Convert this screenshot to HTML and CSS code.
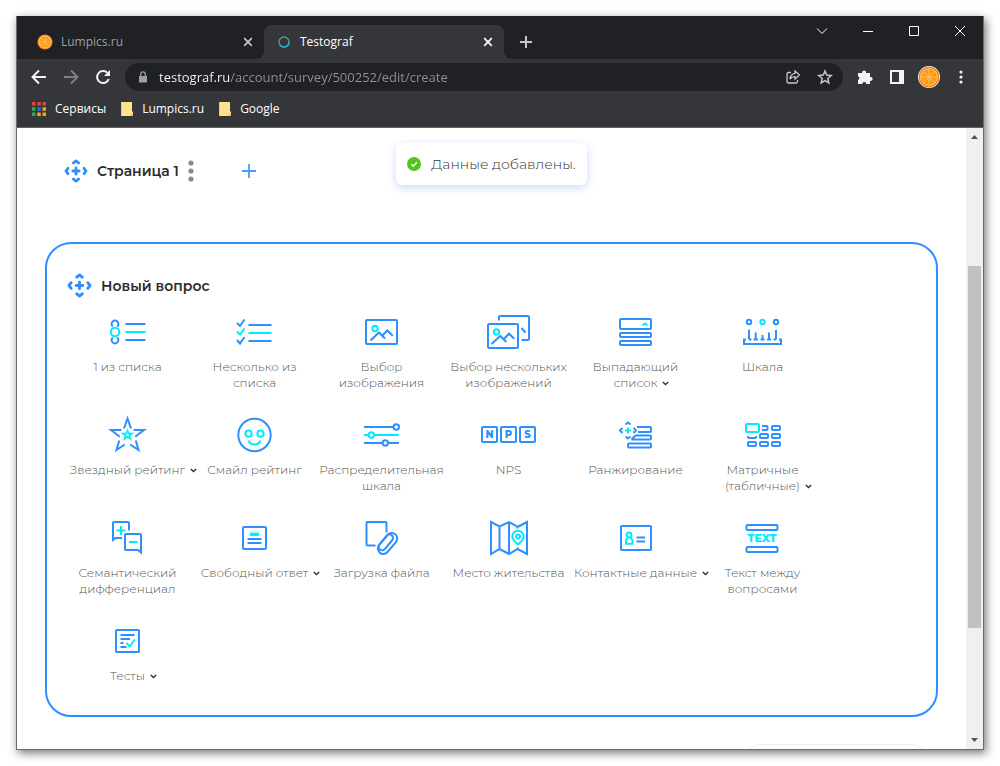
FILE: index.html
```
<!DOCTYPE html>
<html lang="ru">
<head>
<meta charset="utf-8">
<title>Testograf</title>
<link rel="stylesheet" href="styles.css">
</head>
<body>
<svg class="defs" aria-hidden="true">
  <symbol id="orange" viewBox="0 0 20 20">
    <circle cx="10" cy="10" r="9.5" fill="#f5821f"/>
    <circle cx="10" cy="10" r="8.1" fill="#fbc687"/>
    <circle cx="10" cy="10" r="7.2" fill="#ff9b0a"/>
    <path d="M10 3v14M3 10h14M5 5l10 10M15 5L5 15" stroke="#fbc687" stroke-width=".8"/>
  </symbol>
  <symbol id="close" viewBox="0 0 10 10"><path d="M1.2 1.2l7.6 7.6M8.8 1.2L1.2 8.8" stroke="currentColor" stroke-width="1.7"/></symbol>
  <symbol id="move" viewBox="0 0 24 24">
    <path d="M12 8.800v6.400M8.800 12h6.400M9.300 4L12 1.900 14.700 4M9.300 20L12 22.100 14.700 20M4 9.300L1.900 12 4 14.700M20 9.300L22.100 12 20 14.700" fill="none" stroke="#2e8fff" stroke-width="2.800" stroke-linecap="round" stroke-linejoin="round"/>
  </symbol>
  <symbol id="arrow" viewBox="0 0 7 5"><path d="M.8 1l2.700 2.600L6.200 1" fill="none" stroke="#333" stroke-width="1.400"/></symbol>
  <symbol id="folder" viewBox="0 0 12 14"><path d="M0 0h11v9.500h1V14H0z" fill="#ffe28a"/><path d="M0 0h1v14H0zM9.500 11H12v3H9.500z" fill="#f6cc55"/></symbol>
</svg>

<div class="window">
  <header class="tabs">
    <div class="tab">
      <svg class="favicon"><use href="#orange"/></svg>
      <span class="tab-title">Lumpics.ru</span>
      <button class="tab-close" aria-label="Закрыть вкладку"><svg><use href="#close"/></svg></button>
    </div>
    <div class="tab active">
      <svg class="favicon" viewBox="0 0 16 16" fill="none" stroke-width="1.400"><circle cx="8" cy="8" r="5" stroke="#6b8a96"/><path d="M13 8a5 5 0 0 1-9 3" stroke="#12b5cb"/></svg>
      <span class="tab-title">Testograf</span>
      <button class="tab-close" aria-label="Закрыть вкладку"><svg><use href="#close"/></svg></button>
    </div>
    <button class="new-tab" aria-label="Новая вкладка"><svg viewBox="0 0 12 12"><path d="M6 0v12M0 6h12" stroke="currentColor" stroke-width="2"/></svg></button>
    <div class="controls">
      <button aria-label="Поиск вкладок"><svg viewBox="0 0 12 12"><path d="M1 3.500l5 5 5-5"/></svg></button>
      <button aria-label="Свернуть"><svg viewBox="0 0 12 12"><path d="M1 6.500h10"/></svg></button>
      <button aria-label="Развернуть"><svg viewBox="0 0 12 12"><path d="M1.500 1.500h9v9h-9z"/></svg></button>
      <button aria-label="Закрыть"><svg viewBox="0 0 12 12"><path d="M1 1l10 10M11 1L1 11"/></svg></button>
    </div>
  </header>

  <div class="toolbar">
    <button class="tool" aria-label="Назад"><svg viewBox="0 0 16 16"><path d="M15 8H2M8 1.500L1.500 8 8 14.500"/></svg></button>
    <button class="tool dim" aria-label="Вперёд"><svg viewBox="0 0 16 16"><path d="M1 8h13M8 1.500L14.500 8 8 14.500"/></svg></button>
    <button class="tool" aria-label="Обновить"><svg viewBox="0 0 16 16"><path d="M13.800 10a6 6 0 1 1-1.500-6.300"/><path d="M15 1v6H9z" fill="currentColor" stroke="none"/></svg></button>
    <div class="omnibox">
      <svg class="lock" viewBox="0 0 10 12"><path d="M1 5h8v6.500H1z" fill="#9aa0a6"/><path d="M2.700 5V3.200a2.300 2.300 0 0 1 4.600 0V5" fill="none" stroke="#9aa0a6" stroke-width="1.300"/></svg>
      <input class="url" type="text" aria-label="Адрес" value="testograf.ru/account/survey/500252/edit/create">
      <button class="tool soft" aria-label="Поделиться"><svg viewBox="0 0 16 16"><path d="M6 3.500H3.500a1.500 1.500 0 0 0-1.500 1.500v7.500A1.500 1.500 0 0 0 3.500 14h7.500a1.500 1.500 0 0 0 1.500-1.500V11"/><path d="M10 2l4.500 4L10 10V7.700c-2.500 0-4 .8-5.200 2.500C5.300 7 7 4.700 10 4.300z"/></svg></button>
      <button class="tool soft" aria-label="Добавить в закладки"><svg viewBox="0 0 16 16"><path d="M8 2l1.700 4.100 4.500.4-3.400 3 1 4.400L8 11.600l-3.800 2.300 1-4.400-3.400-3 4.500-.4z" stroke-width="1.500"/></svg></button>
    </div>
    <div class="extensions">
      <button class="tool" aria-label="Расширения"><svg viewBox="0 0 16 16"><path d="M1 4h4.200a2 2 0 1 1 3.800 0H13v4a2 2 0 1 1 0 3.800V15H9.300a2 2 0 0 0-4 0H1v-4a2 2 0 0 0 0-3.800z" fill="currentColor" stroke="none"/></svg></button>
      <button class="tool" aria-label="Боковая панель"><svg viewBox="0 0 16 16"><path d="M1 1h14v14H1zM3 3v10h7V3z" fill="currentColor" fill-rule="evenodd" stroke="none"/></svg></button>
      <button class="tool" aria-label="Профиль"><svg class="avatar"><use href="#orange"/></svg></button>
      <button class="tool" aria-label="Меню"><svg viewBox="0 0 16 16"><g fill="currentColor" stroke="none"><circle cx="8" cy="3" r="1.600"/><circle cx="8" cy="8" r="1.600"/><circle cx="8" cy="13" r="1.600"/></g></svg></button>
    </div>
  </div>

  <nav class="bookmarks">
    <a href="#"><svg class="apps" viewBox="0 0 14 14"><path d="M0 0h3.500v3.500H0zM5.300 0h3.500v3.500H5.300zM10.500 0H14v3.500h-3.500z" fill="#ea4335"/><path d="M0 5.300h3.500v3.500H0zM0 10.500h3.500V14H0z" fill="#34a853"/><path d="M5.300 5.300h3.500v3.500H5.300z" fill="#1a73e8"/><path d="M10.500 5.300H14v3.500h-3.500zM5.300 10.500h3.500V14H5.300zM10.500 10.500H14V14h-3.500z" fill="#fba30a"/></svg>Сервисы</a>
    <a href="#"><svg class="folder"><use href="#folder"/></svg>Lumpics.ru</a>
    <a href="#"><svg class="folder"><use href="#folder"/></svg>Google</a>
  </nav>

  <div class="viewport">
    <main class="page">
      <div class="toast" role="status">
        <svg viewBox="0 0 14 14"><circle cx="7" cy="7" r="7" fill="#52c41a"/><path d="M4.300 7.200l2 2 3.600-4" fill="none" stroke="#fff" stroke-width="1.400"/></svg>
        Данные добавлены.
      </div>

      <div class="page-head">
        <svg class="move"><use href="#move"/></svg>
        <h1>Страница 1</h1>
        <button class="more" aria-label="Действия"><svg viewBox="0 0 6 22" fill="#8a8a8a"><circle cx="3" cy="3" r="2.600"/><circle cx="3" cy="11" r="2.600"/><circle cx="3" cy="19" r="2.600"/></svg></button>
        <button class="add" aria-label="Добавить страницу"><svg viewBox="0 0 14 14"><path d="M7 0v14M0 7h14" stroke="#4b9bff" stroke-width="1.800"/></svg></button>
      </div>

      <section class="card">
        <h2><svg class="move"><use href="#move"/></svg>Новый вопрос</h2>
        <div class="types">
          <button class="type">
            <svg class="icon" viewBox="0 0 49 44"><path d="M9.800 16.600a3.400 3.400 0 1 1 4.400 0M9.800 27.400a3.400 3.400 0 1 0 4.400 0M22.500 14h20M22.500 30h20"/><g class="c"><circle cx="12" cy="22" r="4.200"/><path d="M22.500 22h20"/></g></svg>
            <span>1 из списка</span>
          </button>
          <button class="type">
            <svg class="icon" viewBox="0 0 49 44"><path d="M7 13l3 3 4.500-6.500M7 30l3 3.500 4.500-6.500M18.500 15h23M18.500 31h23"/><path class="c" d="M7 21.500l3 3 4.500-6M18.500 23h23"/></svg>
            <span>Несколько из<br>списка</span>
          </button>
          <button class="type">
            <svg class="icon" viewBox="0 0 49 44"><rect x="9" y="10" width="31" height="24" rx="1"/><path d="M13.500 30.500l8.500-8 6 6M25.500 25.500l4.800-5 5.500 5.200"/><circle class="c" cx="18" cy="18.500" r="2.700"/></svg>
            <span>Выбор<br>изображения</span>
          </button>
          <button class="type">
            <svg class="icon" viewBox="0 0 49 44"><rect x="4" y="14" width="30" height="24" rx="1"/><path d="M7.500 34l8.800-8 6 6M20 28.700l5-5 5.300 5M15 10.500V7q0-1 1-1h28q1 0 1 1v22q0 1-1 1h-6.500M37.500 18l4 4.500"/><circle class="c" cx="12.500" cy="22" r="2.700"/></svg>
            <span>Выбор нескольких<br>изображений</span>
          </button>
          <button class="type">
            <svg class="icon" viewBox="0 0 49 44"><rect x="9" y="9" width="31" height="10" rx="1"/><rect x="9" y="23" width="31" height="4" rx="1"/><rect x="9" y="31" width="31" height="4" rx="1"/><path class="c" d="M31.500 15.500L34 13.500l2.500 2"/></svg>
            <span>Выпадающий<br>список<svg class="arrow"><use href="#arrow"/></svg></span>
          </button>
          <button class="type">
            <svg class="icon" viewBox="0 0 49 44"><circle cx="11" cy="12" r="2.200"/><circle cx="38" cy="12" r="2.200"/><path d="M8 29.500H6V34h37v-4.500h-2M11 19.500v10M17.700 22.500v7M24.500 25v4.500M31 22.500v7M38 20v9.500M11 29.500h2.500M15.500 29.500h4.500M22.500 29.500h4M29 29.500h4M35.500 29.500H38"/><circle class="c" cx="24.500" cy="12" r="2.200"/></svg>
            <span>Шкала</span>
          </button>

          <button class="type">
            <svg class="icon" viewBox="0 0 49 44"><path d="M21 15.500l3.500-10 3.500 10M30.500 17H41l-8.800 6.700M32.800 27.500l2.700 9.500-8.300-5.500M16.200 27.500L13.500 37l8.300-5.500M18.500 17H8l8.800 6.700"/><path class="c" d="M24.500 17.500l1.200 3h3.300l-2.600 2 1 3.300-2.900-2-2.900 2 1-3.300-2.600-2h3.300z" stroke-width="1.700"/></svg>
            <span>Звездный рейтинг<svg class="arrow"><use href="#arrow"/></svg></span>
          </button>
          <button class="type">
            <svg class="icon" viewBox="0 0 49 44"><circle cx="24.500" cy="22" r="16.200"/><g class="c"><circle cx="18.500" cy="20.700" r="3.100"/><circle cx="30.500" cy="20.700" r="3.100"/><path d="M18.700 27.500c1 5.200 10.600 5.200 11.600 0"/></g></svg>
            <span>Смайл рейтинг</span>
          </button>
          <button class="type">
            <svg class="icon" viewBox="0 0 49 44"><path d="M7 14h29.500M7 30h18M31.500 30H42"/><circle cx="39.300" cy="14" r="2.700"/><circle cx="28.300" cy="30" r="2.700"/><g class="c"><path d="M7 22h4.500M17.500 22H42"/><circle cx="14.300" cy="22" r="2.700"/></g></svg>
            <span>Распределительная<br>шкала</span>
          </button>
          <button class="type">
            <svg class="icon" viewBox="0 0 49 44"><rect x="-2" y="14" width="15" height="15" rx="1"/><rect x="17" y="14" width="15" height="15" rx="1"/><rect x="36" y="14" width="15" height="15" rx="1"/><g class="letters"><text x="5.500" y="25">N</text><text x="24.500" y="25">P</text><text x="43.500" y="25">S</text></g></svg>
            <span>NPS</span>
          </button>
          <button class="type">
            <svg class="icon" viewBox="0 0 49 44"><path d="M26 14h13q1 0 1 1v3q0 1-1 1H27M24.500 22.500H39q1 0 1 1v2q0 1-1 1H20.500M24.500 22.500l-4 4M14.500 11.500L17 9.500l2.500 2M14.500 23.500l2.500 2 2.500-2M11.500 15L9 17.500l2.500 2.500M22.500 15l2.500 2.500-2.500 2.500"/><rect x="17" y="30.500" width="23" height="4" rx="1"/><path class="c" d="M17 14.500v6M14 17.500h6"/></svg>
            <span>Ранжирование</span>
          </button>
          <button class="type">
            <svg class="icon" viewBox="0 0 49 44"><path d="M24 13h4.500q1 0 1 1v2q0 1-1 1H24M10 23v1q0 1 1 1h6q1 0 1-1v-1"/><rect x="34" y="13" width="8" height="4" rx="1"/><rect x="22" y="21" width="8" height="4" rx="1"/><rect x="34" y="21" width="8" height="4" rx="1"/><rect x="10" y="29" width="8" height="4" rx="1"/><rect x="22" y="29" width="8" height="4" rx="1"/><rect x="34" y="29" width="8" height="4" rx="1"/><rect class="c" x="8" y="11" width="13" height="8" rx="1"/></svg>
            <span>Матричные<br>(табличные)<svg class="arrow"><use href="#arrow"/></svg></span>
          </button>

          <button class="type">
            <svg class="icon" viewBox="0 0 49 44"><path d="M26 14.500V7q0-1-1-1H11q-1 0-1 1v17l2.500-2H19M22 19q0-1 1-1h14q1 0 1 1v17.500L35 34H23q-1 0-1-1z"/><path class="c" d="M18 10v9M13.500 14.500h9M26 26h8.500"/></svg>
            <span>Семантический<br>дифференциал</span>
          </button>
          <button class="type">
            <svg class="icon" viewBox="0 0 49 44"><rect x="13" y="11" width="23" height="22" rx="1"/><path d="M17.500 23h14M17.500 27h14"/><path class="c" d="M20 18.300h9" stroke-width="3.300"/></svg>
            <span>Свободный ответ<svg class="arrow"><use href="#arrow"/></svg></span>
          </button>
          <button class="type">
            <svg class="icon" viewBox="0 0 49 44"><path d="M29.500 16.500V7q0-1-1-1h-18q-1 0-1 1v21.500q0 1 1 1h8"/><g transform="rotate(40 30.500 27.500)"><rect x="25" y="15.500" width="11" height="24" rx="5.500"/><path d="M25 22.500v11a3.500 3.500 0 0 0 7 0V22a3.500 3.500 0 0 0-7 0"/></g></svg>
            <span>Загрузка файла</span>
          </button>
          <button class="type">
            <svg class="icon" viewBox="0 0 49 44"><path d="M33.500 12.500v-2L25 6l-9.500 4.500L7 6v32l8.500-5 9.500 5 8.500-5L43 38V6l-8.500 4.500M15.500 10.500V33M25 6v32M34 31.500V33"/><path class="c" d="M34 28.500c-3.500-3-5.700-5-5.700-8a5.700 5.700 0 0 1 11.400 0c0 3-2.200 5-5.700 8z"/><circle class="c" cx="34" cy="20.500" r="2"/></svg>
            <span>Место жительства</span>
          </button>
          <button class="type">
            <svg class="icon" viewBox="0 0 49 44"><rect x="10" y="10" width="30" height="24" rx="1"/><path d="M25.500 21.500H34M25.500 25.500H34"/><g class="c"><circle cx="18" cy="19" r="2.500"/><path d="M16.800 22.200c-1.300.6-1.800 1.700-1.800 3v2.500h6.500v-2.500c0-1.300-.6-2.400-2-3"/></g></svg>
            <span>Контактные данные<svg class="arrow"><use href="#arrow"/></svg></span>
          </button>
          <button class="type">
            <svg class="icon" viewBox="0 0 49 44"><rect x="8.500" y="9" width="31" height="5" rx="1"/><rect x="8.500" y="31" width="31" height="5" rx="1"/><text class="word" x="24" y="26">TEXT</text></svg>
            <span>Текст между<br>вопросами</span>
          </button>

          <button class="type">
            <svg class="icon" viewBox="0 0 49 44"><rect x="13" y="11" width="23" height="22" rx="1"/><path d="M17.500 16h14M17.500 20H27M17.500 24h3M17.500 28h6"/><path class="c" d="M23.500 24l3.300 3.500 5-7"/></svg>
            <span>Тесты<svg class="arrow"><use href="#arrow"/></svg></span>
          </button>
        </div>
      </section>
      <div class="next-block"></div>
    </main>

    <div class="scrollbar" aria-hidden="true">
      <svg class="scroll-arrow" viewBox="0 0 17 17"><path d="M5 11l3.500-4 3.500 4z"/></svg>
      <div class="space-above"></div>
      <div class="thumb"></div>
      <div class="space-below"></div>
      <svg class="scroll-arrow" viewBox="0 0 17 17"><path d="M5 6l3.500 4L12 6z"/></svg>
    </div>
  </div>
</div>
</body>
</html>
```
FILE: styles.css
```
* { box-sizing: border-box; }
body {
  margin: 0;
  padding: 16px;
  height: 100vh;
  background: #fff;
}
button {
  margin: 0;
  padding: 0;
  border: 0;
  background: none;
  color: inherit;
  font: inherit;
}
svg { display: block; flex: none; }
.defs { position: absolute; width: 0; height: 0; }

.window {
  display: flex;
  flex-direction: column;
  height: 100%;
  border: 1px solid #6b6b6e;
  border-top: 0;
  background: #35363a;
  color: #e8eaed;
  font: 12px/16px "Segoe UI", "Open Sans", "Noto Sans", sans-serif;
  box-shadow: 2px 3px 9px rgba(0, 0, 0, .55);
}

/* Tab strip */
.tabs {
  display: flex;
  align-items: flex-end;
  height: 43px;
  background: #202124;
}
.tab {
  position: relative;
  display: flex;
  align-items: center;
  flex: 0 1 240px;
  height: 34px;
  padding: 0 7px 0 12px;
  color: #9aa0a6;
}
.tab:first-child { flex-basis: 247px; padding-left: 20px; }
.tab.active {
  border-radius: 8px 8px 0 0;
  background: #35363a;
  color: #fff;
}
.tab.active::before,
.tab.active::after {
  content: "";
  position: absolute;
  bottom: 0;
  width: 8px;
  height: 8px;
}
.tab.active::before { right: 100%; background: radial-gradient(circle at 0 0, transparent 8px, #35363a 8px); }
.tab.active::after { left: 100%; background: radial-gradient(circle at 100% 0, transparent 8px, #35363a 8px); }
.favicon { width: 16px; height: 16px; }
.tab-title { flex: 1; margin-left: 8px; }
.tab-close { padding: 4px; color: #c4c7cb; }
.active .tab-close { color: #fff; }
.tab-close svg { width: 10px; height: 10px; }
.new-tab { align-self: flex-end; padding: 11px 16px; color: #c4c7cb; }
.new-tab svg { width: 12px; height: 12px; }
.controls { display: flex; align-self: flex-start; margin-left: auto; }
.controls button { display: grid; place-items: center; width: 46px; height: 30px; }
.controls svg { width: 12px; height: 12px; fill: none; stroke: #fff; stroke-width: 1; }

/* Toolbar */
.toolbar { display: flex; align-items: center; height: 36px; padding: 0 6px; }
.tool { display: grid; place-items: center; width: 32px; height: 28px; color: #f1f3f4; }
.tool svg { width: 16px; height: 16px; fill: none; stroke: currentColor; stroke-width: 2; }
.tool.dim { color: #808185; }
.tool.soft { color: #c4c7cb; }
.tool.soft svg { stroke-width: 1.3; }
.tool .avatar { width: 22px; height: 22px; border-radius: 50%; background: #fff; stroke-width: 0; }
.omnibox {
  display: flex;
  align-items: center;
  flex: 1;
  height: 28px;
  margin: 0 6px;
  padding: 0 2px 0 13px;
  border-radius: 14px;
  background: #202124;
}
.lock { width: 10px; height: 12px; }
.url {
  flex: 1;
  min-width: 0;
  margin-left: 11px;
  padding: 0;
  border: 0;
  outline: 0;
  background: linear-gradient(90deg, #fff 71px, #8f9398 71px);
  background-clip: text;
  -webkit-background-clip: text;
  color: transparent;
  font: 13px/20px "Segoe UI", "Open Sans", "Noto Sans", sans-serif;
}
.extensions { display: flex; }

.bookmarks {
  display: flex;
  align-items: center;
  gap: 15px;
  height: 33px;
  padding: 0 15px 5px;
  border-bottom: 1px solid #606165;
}
.bookmarks a { display: flex; align-items: center; gap: 9px; color: #fff; text-decoration: none; }
.apps { width: 14px; height: 14px; }
.folder { width: 12px; height: 14px; }

/* Survey page */
.viewport { display: flex; flex: 1; min-height: 0; background: #fff; }
.page {
  position: relative;
  flex: 1;
  min-width: 0;
  overflow: hidden;
  padding: 31px 28px 0;
  color: #2b2b2b;
  font-family: "Montserrat", "Inter", sans-serif;
}
.toast {
  position: absolute;
  top: 15px;
  left: 0;
  right: 0;
  display: flex;
  align-items: center;
  gap: 10px;
  width: fit-content;
  height: 42px;
  margin: 0 auto;
  padding: 0 11px;
  border-radius: 6px;
  background: #fff;
  box-shadow: 0 3px 10px rgba(80, 120, 255, .28);
  color: #333;
  font-size: 14px;
  font-weight: 300;
}
.toast svg { width: 14px; height: 14px; }
.page-head { display: flex; align-items: center; height: 24px; padding-left: 19px; }
.page-head .move { width: 24px; height: 24px; }
h1, h2 { margin: 0; font-size: 14px; line-height: 24px; font-weight: 600; }
h1 { margin-left: 9px; }
.more { margin-left: 9px; }
.more svg { width: 6px; height: 22px; }
.add { margin-left: 48px; }
.add svg { width: 14px; height: 14px; }

.card {
  margin-top: 59px;
  padding: 29px 17px 31px;
  border: 2px solid #2e8fff;
  border-radius: 26px;
}
h2 { display: flex; align-items: center; gap: 9px; padding-left: 3px; }
h2 .move { width: 25px; height: 25px; }
.types {
  display: grid;
  grid-template-columns: repeat(auto-fill, 127px);
  row-gap: 22px;
  margin-top: 12px;
}
.type {
  display: flex;
  flex-direction: column;
  align-items: center;
  gap: 5px;
  color: #555;
  font-size: 12px;
  line-height: 16px;
  font-weight: 300;
  white-space: nowrap;
}
.icon {
  width: 49px;
  height: 44px;
  overflow: visible;
  fill: none;
  stroke: #2e8fff;
  stroke-width: 2;
}
.icon .c { stroke: #00eaff; }
.icon text { stroke: none; text-anchor: middle; font-weight: 800; }
.letters { fill: #2e8fff; font-size: 10px; }
.word { fill: #00eaff; font-size: 11px; }
.arrow { display: inline-block; width: 7px; height: 5px; margin: 0 -12px 1px 5px; }
.next-block {
  width: 194px;
  height: 48px;
  margin: 27px 5px 0 auto;
  border: 1px solid #e9edfd;
  border-radius: 24px;
}

.scrollbar { display: flex; flex-direction: column; width: 17px; background: #f0f0f0; }
.scroll-arrow { width: 17px; height: 17px; fill: #505050; }
.space-above { flex: 121; }
.thumb { flex: 362; margin: 0 2px; background: #c1c1c1; }
.space-below { flex: 104; }
```
